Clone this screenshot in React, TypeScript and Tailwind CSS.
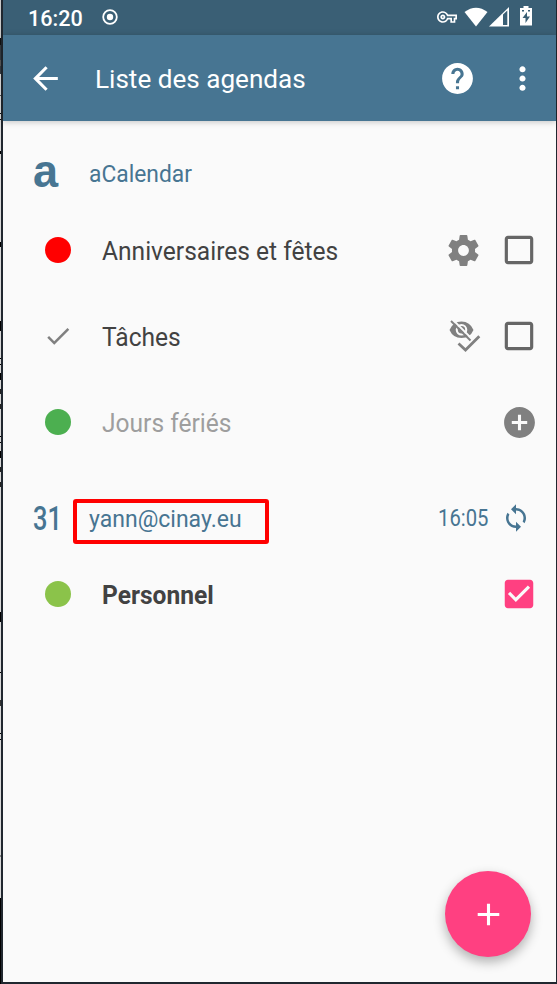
import React from "react";

// [colour, height] pairs for the strip of page visible at the left of the window
const strip: [string, number][] = [
  ["#c8c8c8", 38], ["#111", 7], ["#353b42", 15], ["#555", 6], ["#353b42", 8], ["#d8d8d8", 21],
  ["#555", 1], ["#d8d8d8", 17], ["#111", 1], ["#d8d8d8", 5], ["#111", 1], ["#d8d8d8", 31],
  ["#000", 3], ["#d8d8d8", 88], ["#000", 5], ["#d8d8d8", 74], ["#000", 10], ["#d8d8d8", 27],
  ["#000", 1], ["#d8d8d8", 5], ["#000", 1], ["#d8d8d8", 8], ["#000", 7], ["#d8d8d8", 9],
  ["#222", 5], ["#d8d8d8", 10], ["#222", 5], ["#d8d8d8", 27], ["#000", 1], ["#d8d8d8", 5],
  ["#000", 1], ["#d8d8d8", 8], ["#000", 7], ["#d8d8d8", 9], ["#222", 5], ["#d8d8d8", 10],
  ["#222", 5], ["#d8d8d8", 125], ["#000", 10], ["#d8d8d8", 50], ["#000", 1], ["#d8d8d8", 27],
  ["#333", 6], ["#d8d8d8", 27], ["#000", 1], ["#d8d8d8", 5], ["#000", 1], ["#d8d8d8", 115],
  ["#888", 2], ["#d8d8d8", 41], ["#000", 87],
];

function Icon({ d, size = 37, className = "" }: { d: string; size?: number; className?: string }) {
  return (
    <svg width={size} height={size} viewBox="0 0 24 24" fill="currentColor" className={"shrink-0 " + className}>
      <path d={d} />
    </svg>
  );
}

const BACK = "M20 11H7.83l5.59-5.59L12 4l-8 8 8 8 1.41-1.41L7.83 13H20v-2z";
const HELP = "M12 2C6.48 2 2 6.48 2 12s4.48 10 10 10 10-4.48 10-10S17.52 2 12 2zm1 17h-2v-2h2v2zm2.07-7.75l-.9.92C13.45 12.9 13 13.5 13 15h-2v-.5c0-1.1.45-2.1 1.17-2.83l1.24-1.26c.37-.36.59-.86.59-1.41 0-1.1-.9-2-2-2s-2 .9-2 2H8c0-2.21 1.79-4 4-4s4 1.79 4 4c0 .88-.36 1.68-.93 2.25z";
const MORE = "M12 8c1.1 0 2-.9 2-2s-.9-2-2-2-2 .9-2 2 .9 2 2 2zm0 2c-1.1 0-2 .9-2 2s.9 2 2 2 2-.9 2-2-.9-2-2-2zm0 6c-1.1 0-2 .9-2 2s.9 2 2 2 2-.9 2-2-.9-2-2-2z";
const GEAR = "M19.43 12.98c.04-.32.07-.64.07-.98s-.03-.66-.07-.98l2.11-1.65c.19-.15.24-.42.12-.64l-2-3.46c-.12-.22-.39-.3-.61-.22l-2.49 1c-.52-.4-1.08-.73-1.69-.98l-.38-2.65C14.46 2.18 14.25 2 14 2h-4c-.25 0-.46.18-.49.42l-.38 2.65c-.61.25-1.17.59-1.69.98l-2.49-1c-.23-.09-.49 0-.61.22l-2 3.46c-.13.22-.07.49.12.64l2.11 1.65c-.04.32-.07.65-.07.98s.03.66.07.98l-2.11 1.65c-.19.15-.24.42-.12.64l2 3.46c.12.22.39.3.61.22l2.49-1c.52.4 1.08.73 1.69.98l.38 2.65c.03.24.24.42.49.42h4c.25 0 .46-.18.49-.42l.38-2.65c.61-.25 1.17-.59 1.69-.98l2.49 1c.23.09.49 0 .61-.22l2-3.46c.12-.22.07-.49-.12-.64l-2.11-1.65zM12 15.5c-1.93 0-3.5-1.57-3.5-3.5s1.57-3.5 3.5-3.5 3.5 1.57 3.5 3.5-1.57 3.5-3.5 3.5z";
const BOX = "M19 5v14H5V5h14m0-2H5c-1.1 0-2 .9-2 2v14c0 1.1.9 2 2 2h14c1.1 0 2-.9 2-2V5c0-1.1-.9-2-2-2z";
const BOX_ON = "M19 3H5c-1.11 0-2 .9-2 2v14c0 1.1.89 2 2 2h14c1.11 0 2-.9 2-2V5c0-1.1-.89-2-2-2zm-9 14l-5-5 1.41-1.41L10 14.17l7.59-7.59L19 8l-9 9z";
const ADD_CIRCLE = "M12 2C6.48 2 2 6.48 2 12s4.48 10 10 10 10-4.48 10-10S17.52 2 12 2zm5 11h-4v4h-2v-4H7v-2h4V7h2v4h4v2z";
const CHECK = "M9 16.17L4.83 12l-1.42 1.41L9 19 21 7l-1.41-1.41z";
const SYNC = "M12 4V1L8 5l4 4V6c3.31 0 6 2.69 6 6 0 1.01-.25 1.97-.7 2.8l1.46 1.46C19.54 15.03 20 13.57 20 12c0-4.42-3.58-8-8-8zm0 14c-3.31 0-6-2.69-6-6 0-1.01.25-1.97.7-2.8L5.24 7.74C4.46 8.97 4 10.43 4 12c0 4.42 3.58 8 8 8v3l4-4-4-4v3z";
const KEY = "M22 19h-6v-4h-2.68c-1.14 2.42-3.6 4-6.32 4-3.86 0-7-3.14-7-7s3.14-7 7-7c2.72 0 5.17 1.58 6.32 4H24v6h-2v4zm-4-2h2v-4h2v-2H11.94l-.23-.67C11.01 8.34 9.11 7 7 7c-2.76 0-5 2.24-5 5s2.24 5 5 5c2.11 0 4.01-1.34 4.71-3.33l.23-.67H18v4zM7 15c-1.65 0-3-1.35-3-3s1.35-3 3-3 3 1.35 3 3-1.35 3-3 3zm0-4c-.55 0-1 .45-1 1s.45 1 1 1 1-.45 1-1-.45-1-1-1z";

function HiddenDone() {
  return (
    <svg width="34" height="34" viewBox="0 0 34 34" fill="none" className="shrink-0">
      <path fill="#808080" fillRule="evenodd" d="M1.500 11Q5 2.500 13.500 2.500Q22 2.500 25.500 11Q22 19 13.500 19Q5 19 1.500 11ZM13.500 5A5.800 5.800 0 1 0 13.500 16.600A5.800 5.800 0 1 0 13.500 5Z" />
      <circle cx="13.500" cy="10.800" r="3.700" fill="#808080" />
      <path d="M4.500 .500L24.500 20.500" stroke="#fafafa" strokeWidth="2" />
      <path d="M3 2L22.500 21.500" stroke="#808080" strokeWidth="2" />
      <path d="M11 25L18.300 31.500L32 17.500" stroke="#fafafa" strokeWidth="5" />
      <path d="M10.500 24.500L17.500 31L31.300 17.300" stroke="#808080" strokeWidth="2.800" />
    </svg>
  );
}

function Row({ lead, label, className = "", children }: { lead: React.ReactNode; label: string; className?: string; children: React.ReactNode }) {
  return (
    <div className="flex h-[86px] shrink-0 items-center pr-[18px] pl-[36.500px]">
      <div className="flex w-[37px] shrink-0 justify-center">{lead}</div>
      <span className={"ml-[25px] flex-1 origin-left scale-x-[0.982] pt-[3px] text-[25px] whitespace-nowrap " + className}>{label}</span>
      <div className="flex shrink-0 items-center gap-[18px]">{children}</div>
    </div>
  );
}

export default function App() {
  return (
    <div className="flex h-[984px] w-[557px] overflow-hidden bg-[#20272f] font-[Roboto,sans-serif]">
      <div className="flex w-px shrink-0 flex-col">
        {strip.map(([c, h], i) => <div key={i} className="w-px shrink-0" style={{ height: h, background: c }} />)}
      </div>
      <main className="relative ml-[2px] flex h-[982px] w-[553px] flex-col bg-[#fafafa]">
        <div className="flex h-[35px] shrink-0 items-center bg-[#3a5f75] pl-[25px] text-white">
          <span className="w-[54px] origin-left scale-x-[0.98] pt-px text-[22px] font-medium">16:20</span>
          <svg width="16" height="16" viewBox="0 0 16 16" className="-mt-px ml-[20px]">
            <circle cx="8" cy="8" r="6.800" fill="none" stroke="#fff" strokeWidth="1.800" />
            <circle cx="8" cy="8" r="3.200" fill="#fff" />
          </svg>
          <Icon d={KEY} size={20} className="-mt-px ml-[319px]" />
          <svg width="24" height="20" viewBox="0 0 24 20" className="-mt-px ml-[7px]" fill="#fff"><path d="M.500 5Q12-3.500 23.500 5L12 19.500Z" /></svg>
          <svg width="20" height="20" viewBox="0 0 20 20" className="-mt-px ml-[1px]"><path fill="#fff" d="M0 19.500L20 0V19.500Z" /><path fill="#3a5f75" d="M14 7.500L18.300 3.500V18H14Z" /></svg>
          <svg width="12" height="20" viewBox="0 0 12 20" className="-mt-[3px] ml-[11px]"><path fill="#fff" d="M3.500 0H8.500V2H12V19.500H0V2H3.500Z" /><path fill="#3a5f75" d="M7 6L2.500 12H5.500V17L10 10.500H7ZM2 4H4V5.500H2ZM8 4H10V5.500H8Z" /></svg>
        </div>
        <header className="flex h-[86px] shrink-0 items-center bg-[#477592] pl-[24px] text-white shadow-[0_1px_6px_rgba(0,0,0,0.22)]">
          <Icon d={BACK} />
          <h1 className="ml-[31px] w-[344px] pt-[3px] text-[26.100px] whitespace-nowrap">Liste des agendas</h1>
          <Icon d={HELP} />
          <Icon d={MORE} className="ml-[27.500px]" />
        </header>
        <section className="flex h-[86px] shrink-0 items-center pt-[22px] pl-[30px] text-[#477592]">
          <span className="w-[56px] origin-left scale-x-[0.98] pb-[8px] font-['Liberation_Sans',sans-serif] text-[46px] leading-none font-bold">a</span>
          <span className="origin-left scale-x-[0.975] text-[23.400px]">aCalendar</span>
        </section>
        <Row lead={<span className="size-[26px] rounded-full bg-[#f00]" />} label="Anniversaires et fêtes" className="text-[#424242]">
          <Icon d={GEAR} className="text-[#808080]" /><Icon d={BOX} size={38} className="text-[#666]" />
        </Row>
        <Row lead={<Icon d={CHECK} size={30} className="text-[#808080]" />} label="Tâches" className="text-[#424242]">
          <HiddenDone /><Icon d={BOX} size={38} className="text-[#666]" />
        </Row>
        <Row lead={<span className="size-[26px] rounded-full bg-[#4caf50]" />} label="Jours fériés" className="text-[#9e9e9e]">
          <Icon d={ADD_CIRCLE} className="text-[#808080]" />
        </Row>
        <section className="flex h-[86px] shrink-0 items-center pt-[20px] pl-[30px] text-[#477592]">
          <span className="w-[40px] origin-left scale-x-[0.77] pt-px text-[33px] font-medium">31</span>
          <div className="mt-[6px] flex h-[45px] w-[196px] items-center rounded-[3px] border-4 border-[#f00] pb-[2px] pl-[12px] text-[23px]">yann@cinay.eu</div>
          <span className="ml-[169px] w-[51px] origin-left scale-x-[0.88] pt-[3px] text-[23px]">16:05</span>
          <Icon d={SYNC} size={30} className="ml-[12px]" />
        </section>
        <Row lead={<span className="size-[26px] rounded-full bg-[#8bc34a]" />} label="Personnel" className="font-bold text-[#424242]">
          <Icon d={BOX_ON} size={38} className="text-[#ff4081]" />
        </Row>
        <button className="absolute right-[25px] bottom-[25px] flex size-[86px] items-center justify-center rounded-full bg-[#ff4081] text-white shadow-[0_5px_12px_rgba(0,0,0,0.3)]">
          <Icon d="M19 13h-6v6h-2v-6H5v-2h6V5h2v6h6v2z" />
        </button>
      </main>
    </div>
  );
}
